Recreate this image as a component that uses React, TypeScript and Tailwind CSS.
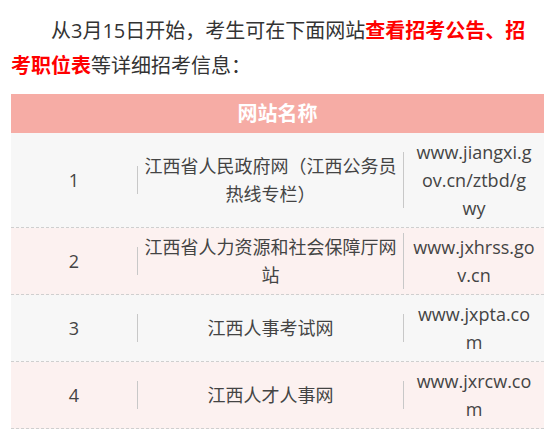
import React from 'react';

type Row = {
  no: string;
  name: string[];
  url: string[];
};

const rows: Row[] = [
  { no: '1', name: ['江西省人民政府网（江西公务员', '热线专栏）'], url: ['www.jiangxi.g', 'ov.cn/ztbd/g', 'wy'] },
  { no: '2', name: ['江西省人力资源和社会保障厅网', '站'], url: ['www.jxhrss.go', 'v.cn'] },
  { no: '3', name: ['江西人事考试网'], url: ['www.jxpta.co', 'm'] },
  { no: '4', name: ['江西人才人事网'], url: ['www.jxrcw.co', 'm'] },
];

const font = { fontFamily: '"Open Sans", "Noto Sans CJK SC", sans-serif' };

const App = () => {
  return (
    <div className="min-h-screen bg-white px-[11px] pt-[13px] text-[#333]" style={font}>
      {/* Intro paragraph */}
      <p className="text-[20px] leading-[35px] indent-[40px]">
        从3月15日开始，考生可在下面网站
        <strong className="font-bold text-[#ff0000]">查看招考公告、招<br />考职位表</strong>
        等详细招考信息：
      </p>

      {/* Site table */}
      <div className="mt-[11px] w-[533px]">
        <div className="flex h-[39px] items-center justify-center bg-[#f6aca5] text-[20px] font-bold text-white">
          网站名称
        </div>

        {rows.map((row, i) => (
          <div
            key={row.no}
            className={`grid grid-cols-[127px_266px_140px] border-b border-dashed border-[#cfcfcf] py-[5px] text-[18px] leading-[28px] text-[#444] ${
              i % 2 === 0 ? 'bg-[#f7f7f7]' : 'bg-[#fcf1f0]'
            }`}
          >
            <div className="flex items-center">
              <div className="w-full border-r border-[#c8c8c8] text-center">{row.no}</div>
            </div>
            <div className="flex items-center">
              <div className="w-full border-r border-[#c8c8c8] px-[6px] text-center">
                {row.name.map((line) => (
                  <div key={line}>{line}</div>
                ))}
              </div>
            </div>
            <div className="flex items-center justify-center">
              <div className="text-center">
                {row.url.map((line) => (
                  <div key={line}>{line}</div>
                ))}
              </div>
            </div>
          </div>
        ))}
      </div>
    </div>
  );
};

export default App;
